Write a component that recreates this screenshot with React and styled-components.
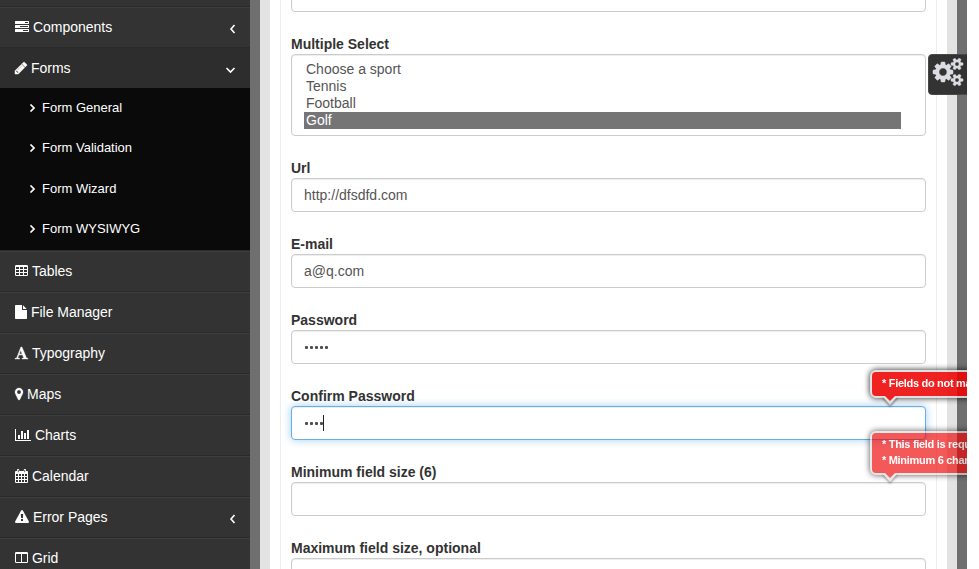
import React from "react";
import styled, { createGlobalStyle, css } from "styled-components";

const GlobalStyle = createGlobalStyle`
  * { box-sizing: border-box; }
  body {
    margin: 0;
    background: #fff;
    font: 14px/20px "Liberation Sans", Arial, sans-serif;
    overflow: hidden;
  }
`;

const Page = styled.div`
  position: relative;
  display: flex;
  width: 967px;
  height: 569px;
  overflow: hidden;
  background: #6f6f6f;
`;

const Sidebar = styled.nav`
  flex: 0 0 250px;
  height: 569px;
  overflow: hidden;
  background: #333;
  color: #fff;
`;

const MenuTop = styled.div`
  height: 7px;
  border-bottom: 1px solid #2a2a2a;
`;

const MenuItem = styled.div`
  display: flex;
  align-items: center;
  height: 41px;
  padding: 0 13px 1px 15px;
  border-top: 1px solid #3e3e3e;
  border-bottom: 1px solid #2a2a2a;
  ${(p) =>
    p.$open &&
    css`
      height: 40px;
      padding-right: 14px;
      padding-bottom: 0;
      background: #2d2d2d;
      border-color: #2d2d2d;
    `}
`;

const MenuLabel = styled.span`
  flex: 1;
  margin-left: 4px;
  letter-spacing: -0.02px;
`;

const Submenu = styled.div`
  height: 163px;
  background: #0a0a0a;
  border-bottom: 1px solid #2a2a2a;
`;

const SubItem = styled.div`
  display: flex;
  align-items: center;
  height: 40.6px;
  padding: 0 0 1.4px 29px;
  gap: 7px;
  font-size: 13px;
`;

const Glyph = styled.svg`
  display: block;
  flex: none;
  fill: currentColor;
  fill-rule: evenodd;
  stroke: currentColor;
  stroke-width: ${(p) => p.$weight};
  overflow: visible;
`;

const Chevron = styled.svg`
  display: block;
  flex: none;
  fill: none;
  stroke: #fff;
  stroke-width: 1.6;
  margin-top: 4px;
`;

const SubChevron = styled(Chevron)`
  margin-top: 0;
`;

const Content = styled.main`
  flex: 0 0 697px;
  margin-left: 10px;
  padding: 0 10px;
  background: #e3e3e3;
`;

const Sheet = styled.div`
  height: 569px;
  padding: 0 10px;
  background: #fff;
`;

const Panel = styled.div`
  height: 569px;
  padding: 0 10px;
  border: solid #eee;
  border-width: 0 1px;
  overflow: hidden;
`;

const Field = styled.div`
  margin-bottom: 22px;
  &:first-child { margin-top: -22px; }
`;

const Label = styled.label`
  display: block;
  height: 20px;
  color: #333;
  font-weight: bold;
`;

const Control = styled.div`
  display: flex;
  align-items: center;
  height: 34px;
  padding: 0 12px;
  border: 1px solid #ccc;
  border-radius: 4px;
  background: #fff;
  color: #555;
  box-shadow: inset 0 1px 1px rgba(0, 0, 0, 0.075);
  ${(p) =>
    p.$focused &&
    css`
      border-color: #66afe9;
      box-shadow: inset 0 1px 1px rgba(0, 0, 0, 0.075), 0 0 8px rgba(102, 175, 233, 0.6);
    `}
`;

const Dots = styled.span`
  display: flex;
  gap: 2px;
  padding-left: 1px;
`;

const Dot = styled.i`
  width: 3px;
  height: 3px;
  border-radius: 1px;
  background: #4d4d4d;
`;

const Caret = styled.i`
  width: 1px;
  height: 16px;
  background: #222;
`;

const SelectBox = styled.div`
  height: 82px;
  padding: 6px 24px 6px 12px;
  border: 1px solid #ccc;
  border-radius: 4px;
  box-shadow: inset 0 1px 1px rgba(0, 0, 0, 0.075);
  color: #555;
`;

const Option = styled.div`
  height: 17px;
  padding: 0 2px;
  line-height: 16px;
  ${(p) => p.$selected && css`background: #757575; color: #fff;`}
`;

const SettingsTab = styled.div`
  position: absolute;
  left: 928px;
  top: 54px;
  width: 42px;
  height: 41px;
  padding: 3px 0 0 4px;
  border: 1px solid #484848;
  border-radius: 4px 0 0 4px;
  background: #333;
  color: #dcdce4;
`;

const ErrorTip = styled.div`
  position: absolute;
  left: 870px;
  top: ${(p) => p.$top}px;
  width: 150px;
  padding: 3px 10px 5px;
  border: 2px solid #ddd;
  border-radius: 6px;
  background: #ee0101;
  box-shadow: 0 0 6px #000;
  color: #fff;
  font-size: 11px;
  font-weight: bold;
  line-height: 16px;
  letter-spacing: -0.3px;
  white-space: nowrap;
  opacity: ${(p) => p.$opacity};
`;

const TipArrow = styled.svg`
  position: absolute;
  left: 10px;
  top: 100%;
  overflow: visible;
  filter: drop-shadow(0 2px 1px rgba(0, 0, 0, 0.5));
`;

const bar = (y) => `M64 ${y}h1664q64 0 64 64v256q0 64-64 64h-1664q-64 0-64-64v-256q0-64 64-64z`;
const grid = (xs, ys, w, h) => xs.flatMap((x) => ys.map((y) => `M${x} ${y}h${w}v${h}h-${w}z`)).join("");

const smallCog = (y) =>
  `M1920 ${y}v140q0 16-149 31-12 27-30 52 51 113 51 138 0 4-4 7-122 71-124 71-8 0-46-47t-52-68q-20 2-30 2t-30-2q-14 21-52 68t-46 47q-2 0-124-71-4-3-4-7 0-25 51-138-18-25-30-52-149-15-149-31v-140q0-16 149-31 13-29 30-52-51-113-51-138 0-4 4-7 4-2 35-20t59-34 30-16q8 0 46 46.5t52 67.5q20-2 30-2t30 2q51-71 92-112l6-2q4 0 124 70 4 3 4 7 0 25-51 138 17 23 30 52 149 15 149 31z`;

const icons = {
  tasks: [1792, bar(128) + bar(640) + bar(1152) + "M1024 1408h640v-128h-640zM640 896h1024v-128h-1024zM1280 384h384v-128h-384z"],
  pencil: [1536, "M363 1536l91-91-235-235-91 91v107h128v128zM886 608q0-22-22-22-10 0-17 7l-542 542q-7 7-7 17 0 22 22 22 10 0 17-7l542-542q7-7 7-17zM832 416l416 416-832 832h-416v-416zM1515 512q0 53-37 90l-166 166-416-416 166-165q36-38 90-38 53 0 91 38l235 234q37 39 37 91z", 60],
  table: [1664, "M160 128h1344q160 0 160 160v1088q0 160-160 160h-1344q-160 0-160-160v-1088q0-160 160-160z" + grid([128, 640, 1152], [384, 768, 1152], 384, 256)],
  file: [1536, "M1024 512v-472q22 14 36 28l408 408q14 14 28 36zM896 544q0 40 28 68t68 28h544v1056q0 40-28 68t-68 28h-1344q-40 0-68-28t-28-68v-1600q0-40 28-68t68-28h800z"],
  font: [1664, "M725 559l-170 450q33 0 136.500 2t160.500 2q19 0 57-2-87-253-184-452zM0 1664l2-79q23-7 56-12.500t57-10.500 49.500-14.500 44.500-29 31-50.500l237-616 280-724h128q8 14 11 21l205 480q33 78 106 257.500t114 274.500q15 34 58 144.500t72 168.500q20 45 35 57 19 15 88 29.500t84 20.500q6 38 6 57 0 5-.5 13.500t-.5 12.500q-63 0-190-8t-191-8q-76 0-215 7t-178 8q0-43 4-78l131-28q1 0 12.500-2.500t15.500-3.500 14.500-4.500 15-6.500 11-8 9-11 2.500-14q0-16-31-96.500t-72-177.500-42-100l-450-2q-26 58-76.500 195.500t-50.500 162.500q0 22 14 37.500t43.500 24.500 48.500 13.500 57 8.500 41 4q1 19 1 58 0 9-2 27-58 0-174.500-10t-174.500-10q-8 0-26.500 4t-21.500 4q-80 14-188 14z", 60],
  marker: [1024, "M768 640q0-106-75-181t-181-75-181 75-75 181 75 181 181 75 181-75 75-181zM1024 640q0 109-33 179l-364 774q-16 33-47.500 52t-67.500 19-67.500-19-46.500-52l-365-774q-33-70-33-179 0-212 150-362t362-150 362 150 150 362z", 40],
  chart: [2048, "M640 896v512h-256v-512zM1024 384v1024h-256v-1024zM2048 1536v128h-2048v-1536h128v1408zM1408 640v768h-256v-768zM1792 256v1152h-256v-1152z"],
  calendar: [1664, "M128 256h128v-96q0-160 112-160h64q112 0 112 160v96h576v-96q0-160 112-160h64q112 0 112 160v96h128q128 0 128 128v1280q0 128-128 128h-1408q-128 0-128-128v-1280q0-128 128-128zM368 128v288h96v-288zM1200 128v288h96v-288z" + grid([128, 512, 896, 1280], [640, 1024, 1408], 256, 256)],
  warning: [1792, "M1024 1375v-190q0-14-9.500-23.500t-22.500-9.500h-192q-13 0-22.500 9.500t-9.500 23.500v190q0 14 9.500 23.500t22.500 9.500h192q13 0 22.500-9.500t9.500-23.500zM1022 1001l18-459q0-12-10-19-13-11-24-11h-220q-11 0-24 11-10 7-10 21l17 457q0 10 10 16.500t24 6.500h185q14 0 23.500-6.500t10.500-16.500zM1008 67l768 1408q35 63-2 126-17 29-46.500 46t-63.500 17h-1536q-34 0-63.500-17t-46.500-46q-37-63-2-126l768-1408q17-31 47-49t65-18 65 18 47 49z"],
  columns: [1664, "M160 128h1344q160 0 160 160v1088q0 160-160 160h-1344q-160 0-160-160v-1088q0-160 160-160zM128 384v992q0 32 32 32h608v-1024zM896 384v1024h608q32 0 32-32v-992z"],
  cogs: [1920, "M896 896q0-106-75-181t-181-75-181 75-75 181 75 181 181 75 181-75 75-181zM1664 1408q0-52-38-90t-90-38-90 38-38 90q0 53 37.500 90.500t90.500 37.500 90.500-37.500 37.500-90.500zM1664 384q0-52-38-90t-90-38-90 38-38 90q0 53 37.500 90.500t90.500 37.500 90.500-37.500 37.500-90.500zM1280 805v185q0 10-7 19.500t-16 10.500l-155 24q-11 35-32 76 34 48 90 115 7 11 7 20 0 12-7 19-23 30-82.500 89.500t-78.500 59.500q-11 0-21-7l-115-90q-37 19-77 31-11 108-23 155-7 24-30 24h-186q-11 0-20-7.500t-10-17.500l-23-153q-34-10-75-31l-118 89q-7 7-20 7-11 0-21-8-144-133-144-160 0-9 7-19 10-14 41-53t47-61q-23-44-35-82l-152-24q-10-1-17-9.500t-7-19.500v-185q0-10 7-19.500t16-10.500l155-24q11-35 32-76-34-48-90-115-7-11-7-20 0-12 7-20 22-30 82-89t79-59q11 0 21 7l115 90q34-18 77-32 11-108 23-154 7-24 30-24h186q11 0 20 7.500t10 17.500l23 153q34 10 75 31l118-89q8-7 20-7 11 0 21 8 144 133 144 160 0 8-7 19-12 16-42 54t-45 60q23 48 34 82l152 23q10 2 17 10.500t7 19.500z" + smallCog(1338) + smallCog(314), 30],
};

function Icon({ name, size = 14 }) {
  const [width, path, weight = 0] = icons[name];
  return (
    <Glyph $weight={weight} width={(width / 1792) * size} height={size} viewBox={`0 0 ${width} 1792`} aria-hidden="true">
      <path d={path} />
    </Glyph>
  );
}

function Item({ icon, label, arrow }) {
  return (
    <MenuItem $open={arrow === "down"}>
      <Icon name={icon} />
      <MenuLabel>{label}</MenuLabel>
      {arrow === "left" && (
        <Chevron width="8" height="10" viewBox="0 0 8 10"><path d="M5.500 1L2 5l3.500 4" /></Chevron>
      )}
      {arrow === "down" && (
        <Chevron width="11" height="8" viewBox="0 0 11 8"><path d="M1.500 2l4 4 4-4" /></Chevron>
      )}
    </MenuItem>
  );
}

function Tip({ top, opacity, lines }) {
  return (
    <ErrorTip $top={top} $opacity={opacity}>
      {lines.map((line) => <div key={line}>{line}</div>)}
      <TipArrow width="16" height="9" viewBox="0 0 16 9">
        <path d="M0 0L8 9L16 0z" fill="#ddd" />
        <path d="M1-2L3 0L8 5L13 0L15-2z" fill="#ee0101" />
      </TipArrow>
    </ErrorTip>
  );
}

function Password({ count, focused }) {
  return (
    <Control $focused={focused}>
      <Dots>{Array.from({ length: count }, (_, i) => <Dot key={i} />)}</Dots>
      {focused && <Caret />}
    </Control>
  );
}

const sports = ["Choose a sport", "Tennis", "Football", "Golf"];
const formPages = ["Form General", "Form Validation", "Form Wizard", "Form WYSIWYG"];

export default function App() {
  return (
    <>
      <GlobalStyle />
      <Page>
        <Sidebar>
          <MenuTop />
          <Item icon="tasks" label="Components" arrow="left" />
          <Item icon="pencil" label="Forms" arrow="down" />
          <Submenu>
            {formPages.map((page) => (
              <SubItem key={page}>
                <SubChevron width="6" height="8" viewBox="0 0 6 8"><path d="M1.500 0.500L5 4l-3.500 3.500" /></SubChevron>
                {page}
              </SubItem>
            ))}
          </Submenu>
          <Item icon="table" label="Tables" />
          <Item icon="file" label="File Manager" />
          <Item icon="font" label="Typography" />
          <Item icon="marker" label="Maps" />
          <Item icon="chart" label="Charts" />
          <Item icon="calendar" label="Calendar" />
          <Item icon="warning" label="Error Pages" arrow="left" />
          <Item icon="columns" label="Grid" />
        </Sidebar>
        <Content>
          <Sheet>
            <Panel>
              <Field><Control /></Field>
              <Field>
                <Label>Multiple Select</Label>
                <SelectBox>
                  {sports.map((sport) => (
                    <Option key={sport} $selected={sport === "Golf"}>{sport}</Option>
                  ))}
                </SelectBox>
              </Field>
              <Field><Label>Url</Label><Control>http://dfsdfd.com</Control></Field>
              <Field><Label>E-mail</Label><Control>a@q.com</Control></Field>
              <Field><Label>Password</Label><Password count={5} /></Field>
              <Field><Label>Confirm Password</Label><Password count={4} focused /></Field>
              <Field><Label>Minimum field size (6)</Label><Control /></Field>
              <Field><Label>Maximum field size, optional</Label><Control /></Field>
            </Panel>
          </Sheet>
        </Content>
        <SettingsTab><Icon name="cogs" size={28} /></SettingsTab>
        <Tip top={370} opacity={0.87} lines={["* Fields do not match"]} />
        <Tip top={431} opacity={0.65} lines={["* This field is required", "* Minimum 6 characters required"]} />
      </Page>
    </>
  );
}
